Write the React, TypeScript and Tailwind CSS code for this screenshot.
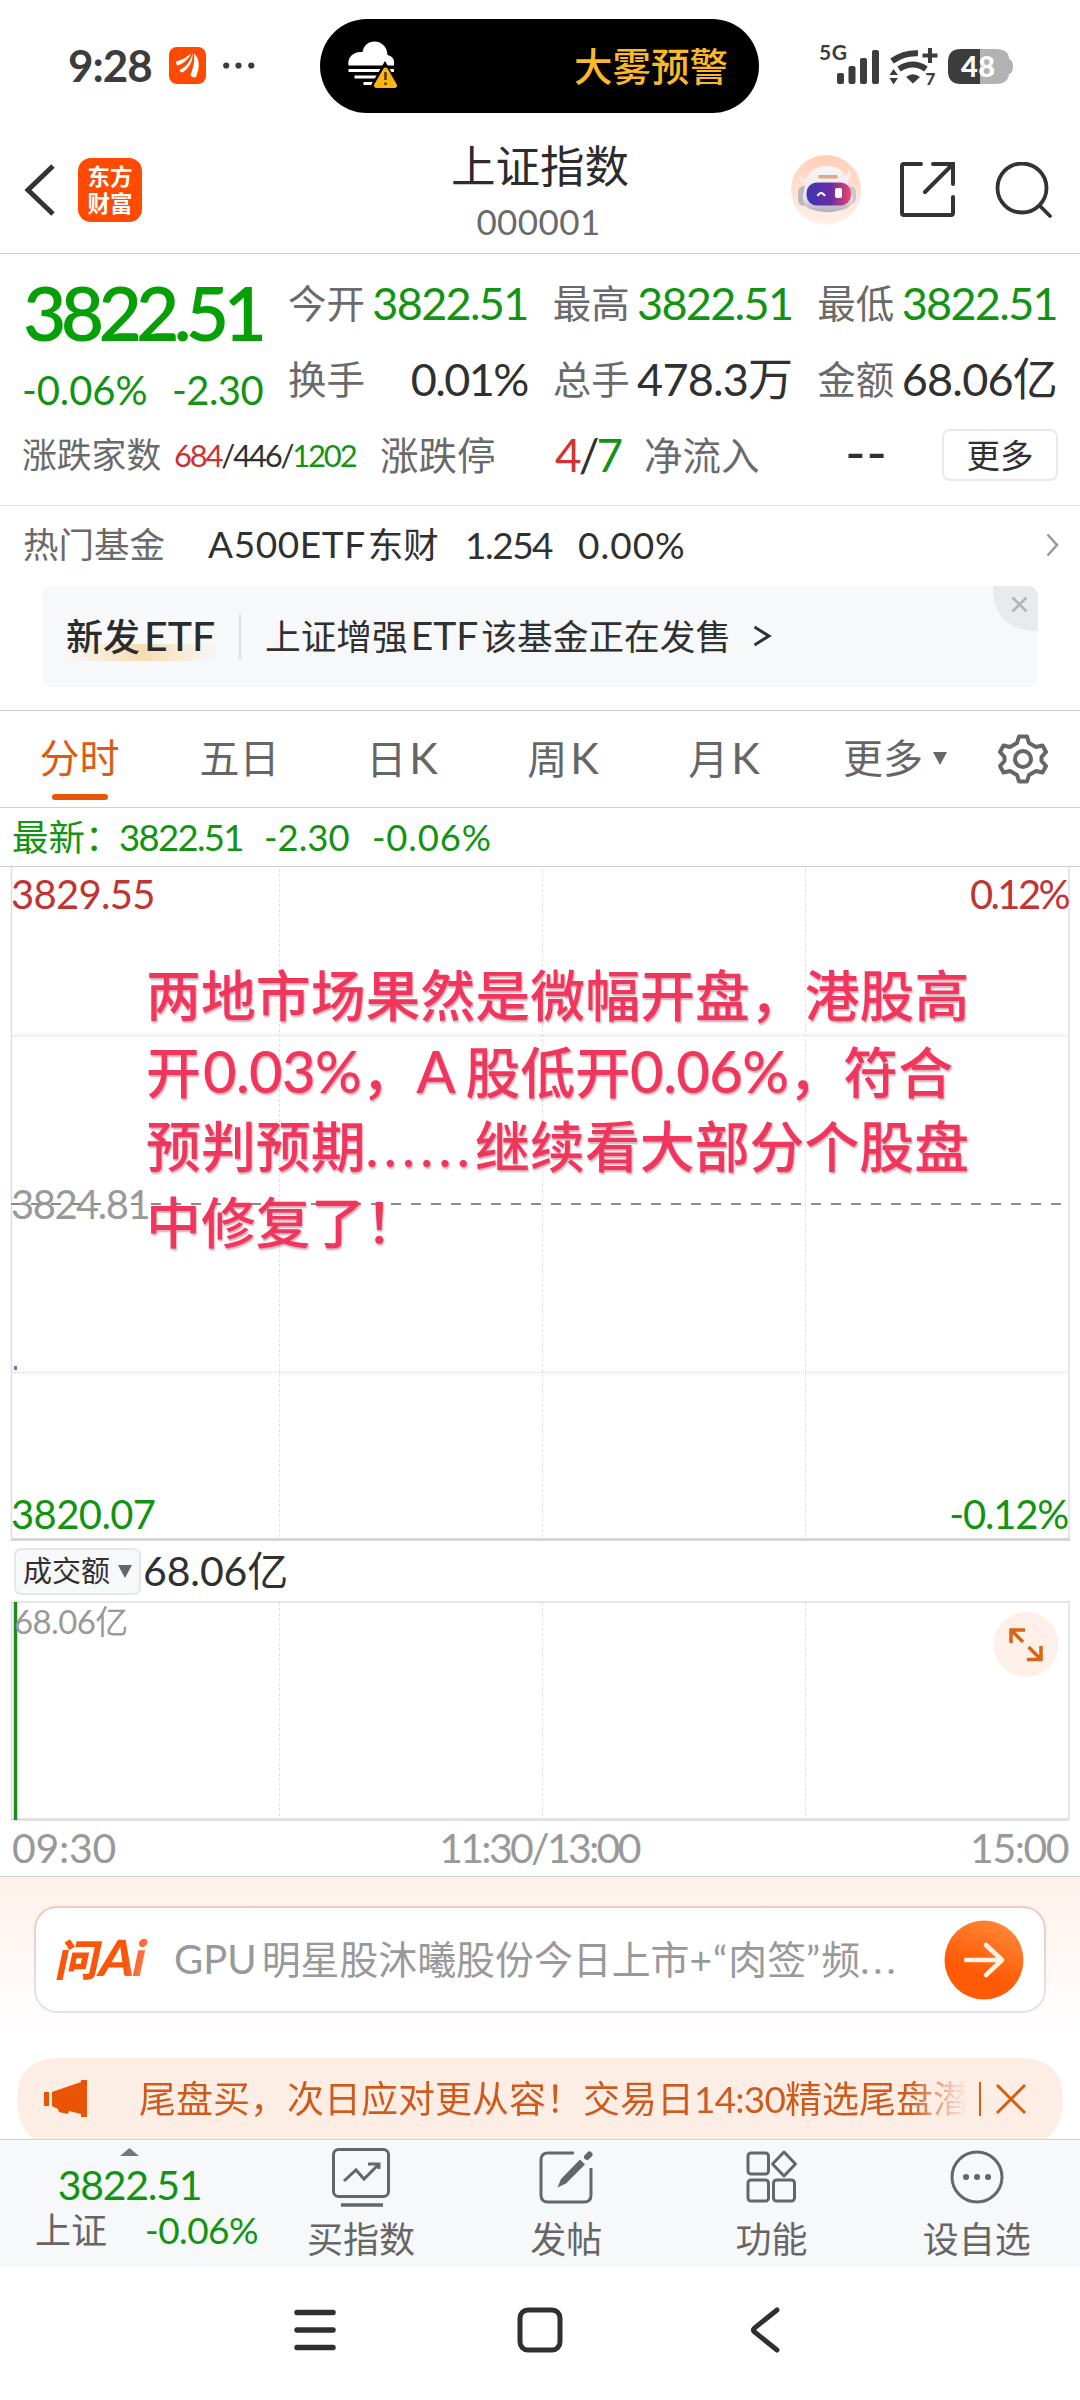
import React from "react";

const GREEN = "text-[#129412]";

function StatusBar() {
  return (
    <header className="flex h-[132px] items-center">
      <div className="mb-[2px] ml-[68px] w-[84px] whitespace-nowrap font-[Lato] text-[44px] font-bold leading-[44px] tracking-[-1px] text-[#3c3c3c]">9:28</div>
      <svg className="mb-px ml-[17px] h-[37px] w-[37px]" viewBox="0 0 37 37">
        <rect width="37" height="37" rx="8" fill="#ff4a00" />
        <path d="M7 14.500C14 13 17 10 22 6.500C20 12 14 17 8.500 18.500C7.500 18 7 16 7 14.500Z" fill="#fff" />
        <path d="M10.500 23C17 20 22 14 23.500 6C24.500 14 20 21 13.500 25.500C12 25.500 11 24.500 10.500 23Z" fill="#fff" />
        <path d="M21.500 28C24 21 26 15 25 6.500C31 12 31 20 27 30C25 31 22.500 30 21.500 28Z" fill="#fff" />
      </svg>
      <svg className="mb-px ml-[17px] h-[7px] w-[32px]" viewBox="0 0 32 7" fill="#3c3c3c">
        <circle cx="3.200" cy="3.500" r="3.100" />
        <circle cx="15.500" cy="3.500" r="3.100" />
        <circle cx="28.300" cy="3.500" r="3.100" />
      </svg>
      <div className="ml-[65px] flex h-[94px] w-[439px] items-center justify-between rounded-full bg-black pl-[27px] pr-[31px]">
        <svg className="h-[50px] w-[50px]" viewBox="0 0 50 50">
          <path d="M1.500 24.500H47C48 18 45 15 40.500 14C40 5 34 .5 27.500 .5C21 .5 16.500 5 15.500 11C7 10 0 16 1.500 24.500Z" fill="#fff" />
          <path d="M1.500 29.500H47M7.500 36H40M16.500 42.500H27" stroke="#fff" strokeWidth="3.200" />
          <path d="M38 25L52 49H24Z" fill="#000" stroke="#000" strokeWidth="5" />
          <path d="M38.500 29L47.500 44.500H29.500Z" fill="#fcb416" stroke="#fcb416" strokeWidth="5" strokeLinejoin="round" />
          <path d="M38.500 31V39M38.500 41.500V44" stroke="#5a3c00" strokeWidth="2.600" />
        </svg>
        <span className="text-[38.500px] font-medium leading-[46px] text-[#fbb829]">大雾预警</span>
      </div>
      <svg className="mb-[3px] ml-[61px] h-[42px] w-[196px] overflow-visible" viewBox="0 0 196 42" fill="#3c3c3c">
        <text x="-1" y="16" fontFamily="Lato" fontWeight="700" fontSize="21" textLength="28">5G</text>
        <rect x="17" y="29" width="7" height="11" rx="2" />
        <rect x="28.500" y="22" width="7" height="18" rx="2" />
        <rect x="40" y="14" width="7" height="26" rx="2" />
        <rect x="52" y="6" width="7" height="34" rx="2" />
        <path d="M72 17Q84 8.500 98 9.200M79 25Q93 16 106 25" fill="none" stroke="#3c3c3c" strokeWidth="6" />
        <path d="M86 33Q93 27.500 100 33L93 39.500Z" />
        <path d="M69.500 31L73.500 25L78 31ZM69.500 34L73.500 40.500L78 34Z" />
        <path d="M110 4V19M102.500 11.500H117.500" stroke="#3c3c3c" strokeWidth="4" />
        <text x="105.500" y="41" fontFamily="Lato" fontWeight="900" fontSize="17">7</text>
        <path d="M144 5H176Q189 5 189 15Q193 16 193 22.500Q193 29 189 30Q188 40 176 40H144Z" fill="#b2b2b2" />
        <path d="M160 5H141Q128 5 128 18V27Q128 40 141 40H160Z" />
        <text x="141" y="32.500" fontFamily="Lato" fontWeight="900" fontSize="29" fill="#fff" textLength="34">48</text>
      </svg>
    </header>
  );
}

function Robot() {
  return (
    <svg className="h-[70px] w-[70px]" viewBox="0 0 70 70">
      <defs>
        <linearGradient id="halo" x1="0" y1="0" x2="0" y2="1">
          <stop stopColor="#ffcfb6" />
          <stop offset="1" stopColor="#fff1ea" />
        </linearGradient>
        <linearGradient id="visor">
          <stop stopColor="#3b37b3" />
          <stop offset=".55" stopColor="#6a2ca5" />
          <stop offset="1" stopColor="#e8496a" />
        </linearGradient>
        <linearGradient id="shell" x1="0" y1="0" x2="0" y2="1">
          <stop stopColor="#fbf7f7" />
          <stop offset=".7" stopColor="#e6e2e9" />
          <stop offset="1" stopColor="#b0abb6" />
        </linearGradient>
      </defs>
      <circle cx="35" cy="35" r="35" fill="url(#halo)" />
      <path d="M9 16Q8 24 17 25L14 29Q6 25 9 16ZM58 14Q63 22 55 27L52 22Q58 20 58 14Z" fill="#f5eeee" />
      <rect x="7" y="31" width="12" height="20" rx="6" fill="#bcb8c0" />
      <rect x="53" y="31" width="12" height="18" rx="6" fill="#cbc7ce" />
      <path d="M14 31Q16 12 35 11Q54 11 58 31L62 44Q60 54 50 55Q34 60 19 54Q11 51 12 40Z" fill="url(#shell)" />
      <rect x="15.500" y="27.500" width="44.500" height="23" rx="10.500" fill="url(#visor)" />
      <rect x="27" y="20" width="20" height="3.500" rx="1.700" fill="#e0a887" />
      <path d="M26.500 41Q30 35 34 41" fill="none" stroke="#fff" strokeWidth="2.200" />
      <rect x="44" y="33" width="7" height="10" rx="2" fill="#fff" />
    </svg>
  );
}

function TitleBar() {
  return (
    <div className="flex h-[122px] border-b border-[#d0d0d0]">
      <div className="flex w-[320px] items-start pt-[26px]">
        <svg className="ml-[24px] mt-[5px] h-[54px] w-[32px]" viewBox="0 0 32 54">
          <path d="M29 3L4 27L29 51" fill="none" stroke="#333" strokeWidth="5" />
        </svg>
        <div className="ml-[22px] flex h-[64px] w-[64px] flex-col items-center justify-center rounded-[13px] bg-[#ff4a00] text-[22.500px] font-bold leading-[27px] text-white">
          <span>东方</span>
          <span>财富</span>
        </div>
      </div>
      <div className="flex w-[440px] flex-col items-center pt-[6px]">
        <h1 className="text-[44.500px] leading-[56px] text-[#2c2c2c]">上证指数</h1>
        <div className="mt-[14px] whitespace-nowrap pr-[3px] text-[35px] leading-[26px] tracking-[.4px] text-[#6a6a6a]">000001</div>
      </div>
      <div className="flex pl-[31px] pt-[23px]">
        <Robot />
        <svg className="ml-[38px] mt-[6px] h-[56px] w-[56px]" viewBox="0 0 56 56" fill="none" stroke="#333" strokeWidth="4">
          <path d="M22 3H5Q3 3 3 5V52Q3 54 5 54H52Q54 54 54 52V36M34 3H54V23M53 4L26 31" strokeLinecap="round" />
        </svg>
        <svg className="ml-[40px] mt-[7px] h-[58px] w-[58px]" viewBox="0 0 58 58" fill="none" stroke="#333" strokeWidth="3.800">
          <circle cx="27" cy="26" r="24.500" />
          <path d="M45 44L55 54" strokeLinecap="round" />
        </svg>
      </div>
    </div>
  );
}

const stats = [
  { label: "今开", value: "3822.51", cls: "text-[#129412] tracking-[-1.700px]" },
  { label: "最高", value: "3822.51", cls: "text-[#129412] tracking-[-1.700px]" },
  { label: "最低", value: "3822.51", cls: "text-[#129412] tracking-[-1.700px]" },
  { label: "换手", value: "0.01%", cls: "text-[#303030] tracking-[-1.600px]" },
  { label: "总手", value: "478.3万", cls: "text-[#303030] tracking-[-.800px]" },
  { label: "金额", value: "68.06亿", cls: "text-[#303030] tracking-[-.800px]" },
];

function Quote() {
  return (
    <section className="h-[252px] border-b border-[#e6e6e6] pt-[21px]">
      <div className="flex">
        <div className="ml-[22px] w-[241px] shrink-0">
          <div className="whitespace-nowrap pl-px pt-[4px] text-[75px] font-semibold leading-[66px] tracking-[-5.800px] text-[#06a006]">3822.51</div>
          <div className={`mt-[27px] flex justify-between whitespace-nowrap text-[40px] leading-[36px] ${GREEN}`}>
            <span className="tracking-[-.1px]">-0.06%</span>
            <span className="tracking-[-.6px]">-2.30</span>
          </div>
        </div>
        <div className="ml-[25px] grid w-[769px] grid-cols-3 gap-x-[25px] text-[38.500px]">
          {stats.map((s) => (
            <div key={s.label} className="flex h-[76px] justify-between whitespace-nowrap leading-[56px]">
              <span className="text-[#6a6a6a]">{s.label}</span>
              <span className={`text-[45px] ${s.cls}`}>{s.value}</span>
            </div>
          ))}
        </div>
      </div>
      <div className="flex h-[56px] items-center whitespace-nowrap leading-[50px]">
        <span className="ml-[22px] w-[152px] text-[34.800px] text-[#6a6a6a]">涨跌家数</span>
        <span className="w-[206px] text-[31px] tracking-[-2.200px] text-[#303030]">
          <span className="text-[#cb3434]">684</span>/446/<span className={GREEN}>1202</span>
        </span>
        <span className="w-[175px] text-[38.500px] text-[#6a6a6a]">涨跌停</span>
        <span className="w-[89px] text-[46px] tracking-[-3px] text-[#303030]">
          <span className="text-[#d23434]">4</span>/<span className={GREEN}>7</span>
        </span>
        <span className="w-[201px] text-[38.500px] text-[#6a6a6a]">净流入</span>
        <span className="w-[97px] pb-[6px] text-[56px] leading-[50px] tracking-[.5px] text-[#303030]">--</span>
        <button className="h-[52px] w-[116px] rounded-[8px] border-2 border-[#e9e9ec] pb-px text-[33.500px] leading-[46px] text-[#303030]">更多</button>
      </div>
    </section>
  );
}

function Funds() {
  return (
    <section className="h-[205px] border-b border-[#cfcfcf]">
      <div className="flex h-[77px] items-center whitespace-nowrap text-[35.500px] leading-[50px] text-[#303030]">
        <span className="ml-[23px] w-[185px] text-[#6a6a6a]">热门基金</span>
        <span className="w-[257px]"><span className="mr-[2px] text-[37px] tracking-[.6px]">A500ETF</span>东财</span>
        <span className="w-[113px] text-[37px] tracking-[-1.500px]">1.254</span>
        <span className="text-[37px] tracking-[1px]">0.00%</span>
        <svg className="ml-auto mr-[21px] h-[24px] w-[13px]" viewBox="0 0 13 24" fill="none" stroke="#999" strokeWidth="2.500">
          <path d="M1.500 1.500L11 12L1.500 22.500" />
        </svg>
      </div>
      <div className="relative ml-[42px] mt-[3px] flex h-[101px] w-[996px] items-center overflow-hidden rounded-[10px] bg-[#f7f8fa] pb-px pl-[24px]">
        <div className="relative w-[175px] border-r-2 border-[#dcdde0] text-[#2b2b2b]">
          <div className="absolute left-0 top-[30px] h-[17px] w-[152px] bg-linear-to-r from-transparent via-[#f8dcb2] to-transparent" />
          <span className="relative block whitespace-nowrap text-[37px] font-medium leading-[45px]">新发<span className="ml-[4px] text-[41px] leading-[40px]">ETF</span></span>
        </div>
        <span className="ml-[24px] whitespace-nowrap text-[35.700px] leading-[50px] text-[#303030]">上证增强<span className="mx-[3px] text-[39px]">ETF</span>该基金正在发售</span>
        <svg className="ml-[22px] h-[22px] w-[19px]" viewBox="0 0 19 22" fill="none" stroke="#303030" strokeWidth="3">
          <path d="M1.500 2L16 11L1.500 20" />
        </svg>
        <svg className="absolute right-0 top-0 h-[45px] w-[45px]" viewBox="0 0 45 45">
          <path d="M0 0H45V45Q0 45 0 0Z" fill="#e9eaec" />
          <path d="M19.500 11.500L33.500 25.500M33.500 11.500L19.500 25.500" stroke="#b3b3b3" strokeWidth="2.500" />
        </svg>
      </div>
    </section>
  );
}

function Tabs() {
  return (
    <nav className="flex h-[97px] whitespace-nowrap border-b border-[#cfcfcf] pt-[19px] text-[40px] leading-[56px] text-[#666]">
      <div className="flex w-[159px] flex-col items-center text-[#db5b12]">
        分时
        <span className="mt-[8px] h-[6px] w-[56px] rounded-full bg-[#e75506]" />
      </div>
      <span className="w-[161px] text-center">五日</span>
      <span className="w-[164px] text-center">日<span className="ml-[3px] text-[43px]">K</span></span>
      <span className="w-[158px] text-center">周<span className="ml-[3px] text-[43px]">K</span></span>
      <span className="w-[164px] text-center">月<span className="ml-[3px] text-[43px]">K</span></span>
      <span className="pl-[37px]">更多</span>
      <svg className="ml-[10px] mt-[22px] h-[13px] w-[14px]" viewBox="0 0 14 13"><path d="M0 0H14L7 13Z" fill="#666" /></svg>
      <svg className="ml-[51px] mt-[4px] h-[50px] w-[50px]" viewBox="0 0 50 50" fill="none" stroke="#666" strokeWidth="4">
        <path d="M21 2.500H29L31 9L38 13L44.500 11.500L48 18L43.500 23V27L48 32L44.500 38.500L38 37L31 41L29 47.500H21L19 41L12 37L5.500 38.500L2 32L6.500 27V23L2 18L5.500 11.500L12 13L19 9Z" strokeLinejoin="round" />
        <circle cx="25" cy="25" r="8" />
      </svg>
    </nav>
  );
}

function PriceChart() {
  return (
    <section className="relative h-[675px]">
      <svg className="absolute inset-0 h-[675px] w-[1080px]" viewBox="0 0 1080 675" fill="none">
        <path d="M11.500 0V674M1069 0V674" stroke="#dedede" strokeWidth="1.500" />
        <path d="M279.500 2V672M542.500 2V672M805.500 2V672" stroke="#e2e2e2" strokeDasharray="3 2" />
        <path d="M13 168.500H1069M13 505.500H1069" stroke="#e0e0e0" strokeDasharray="1 1" strokeWidth="2" />
        <path d="M11 337H1069" stroke="#8a8a8a" strokeWidth="2" strokeDasharray="10 10" />
        <path d="M11 672.500H1070" stroke="#d6d6d6" strokeWidth="3" />
        <rect x="14" y="499" width="3" height="4" fill="#5a7fa5" />
      </svg>
      <div className="relative flex h-[675px] flex-col justify-between pb-[6px] pl-[11px] pr-[12px] pt-[5px] text-[40px] leading-[44px] tracking-[-.9px]">
        <div className="flex justify-between text-[#c03434]"><span className="tracking-[-.7px]">3829.55</span><span className="tracking-[-2.600px]">0.12%</span></div>
        <div className="tracking-[-1.500px] text-[#999]">3824.81</div>
        <div className={`flex justify-between ${GREEN}`}><span className="tracking-[-.6px]">3820.07</span><span className="tracking-[-1.200px]">-0.12%</span></div>
      </div>
      <div className="absolute left-[146px] top-[91px] whitespace-nowrap text-[54.900px] font-medium leading-[75.700px] text-[#f0365c] [text-shadow:1px_2px_2px_rgba(140,40,70,.4)]">
        <div className="h-[75.700px]">两地市场果然是微幅开盘，港股高</div>
        <div className="relative -top-px h-[75.700px]">开<span className="ml-[2px] text-[58px] tracking-[-.6px]">0.03%</span>，<span className="text-[58px] tracking-[-1.500px]">A </span>股低开<span className="text-[58px] tracking-[-.6px]">0.06%</span>，符合</div>
        <div className="h-[75.700px]">预判预期<span className="tracking-[5.300px]">......</span>继续看大部分个股盘</div>
        <div className="h-[75.700px]">中修复了！</div>
      </div>
    </section>
  );
}

function Volume() {
  return (
    <section className="h-[335px] border-b border-[#cfcfcf]">
      <div className="flex h-[59px] items-center whitespace-nowrap">
        <div className="mb-px ml-[14px] flex h-[47px] w-[127px] items-center rounded-[7px] border-2 border-[#e6e7ea] bg-[#f7f8fa] pl-[7px] text-[29px] leading-[40px] text-[#303030]">
          成交额
          <svg className="ml-[8px] h-[13px] w-[14px]" viewBox="0 0 14 13"><path d="M0 0H14L7 13Z" fill="#666" /></svg>
        </div>
        <span className="mb-[2px] ml-[2px] text-[41px] leading-[50px] tracking-[-.1px] text-[#303030]">68.06亿</span>
      </div>
      <div className="relative h-[221px]">
        <svg className="absolute inset-0 h-[221px] w-[1080px]" viewBox="0 0 1080 221" fill="none">
          <path d="M11.500 1H1069V219" stroke="#dedede" strokeWidth="1.500" />
          <path d="M11.500 1V219" stroke="#dedede" strokeWidth="1.500" />
          <path d="M11 218.500H1069" stroke="#dcdcdc" strokeWidth="2.500" />
          <path d="M279.500 2V217M542.500 2V217M805.500 2V217" stroke="#e2e2e2" strokeDasharray="3 2" />
          <path d="M15.500 1V219" stroke="#1c8c1c" strokeWidth="3.500" />
          <circle cx="1026" cy="43.500" r="32.500" fill="#fdf0e9" />
          <path d="M1011 42V29H1025M1011.500 29.500L1023 41M1041 45V58.500H1027M1040.500 58L1028.500 46" stroke="#dc6214" strokeWidth="3.500" />
        </svg>
        <span className="relative ml-[14px] block whitespace-nowrap text-[33px] leading-[40px] tracking-[-.6px] text-[#999]">68.06亿</span>
      </div>
      <div className="flex h-[52px] items-center justify-between whitespace-nowrap px-[12px] text-[41px] leading-[50px] text-[#999]">
        <span className="tracking-[-.3px]">09:30</span>
        <span className="relative -left-[4px] tracking-[-2.700px]">11:30/13:00</span>
        <span className="tracking-[-1.500px]">15:00</span>
      </div>
    </section>
  );
}

function Ask() {
  return (
    <section className="h-[262px] bg-linear-to-b from-[#fff1ec] to-white to-60% pt-[29px]">
      <div className="mx-[34px] rounded-[23px] bg-linear-to-b from-[#f0c8c0] to-[#dde6ee] p-[2px]">
        <div className="flex h-[103px] items-center rounded-[21px] bg-white pl-[19px]">
          <div className="w-[119px] shrink-0 -skew-x-[12deg] whitespace-nowrap bg-linear-to-r from-[#f9560a] via-[#f9560a] via-60% to-[#ffa27c] bg-clip-text pb-[3px] pl-[3px] text-[43px] font-black leading-[52px] tracking-[-1px] text-transparent">问<span className="text-[50px] tracking-[-2px]">Ai</span></div>
          <span className="w-[770px] shrink-0 whitespace-nowrap pb-[2px] text-[38.900px] leading-[50px] text-[#999]"><span className="mr-[5px] text-[40px]">GPU</span>明星股沐曦股份今日上市<span className="tracking-[1px]">+“</span>肉签<span className="tracking-[1px]">”</span>频<span className="tracking-[4px]">...</span></span>
          <svg className="h-[80px] w-[80px] shrink-0" viewBox="0 0 80 80" fill="none">
            <defs>
              <linearGradient id="send" x1=".8" y1="0" x2=".35" y2="1">
                <stop stopColor="#ff8a38" />
                <stop offset=".7" stopColor="#ff5a06" />
              </linearGradient>
            </defs>
            <circle cx="40" cy="40" r="39.500" fill="url(#send)" />
            <path d="M22 40H58M42 25L58 40L42 55" stroke="#fff4e4" strokeWidth="4.500" strokeLinecap="round" strokeLinejoin="round" />
          </svg>
        </div>
      </div>
      <div className="ml-[17px] mt-[45px] flex h-[81px] w-[1046px] items-center bg-[#fceee5] pl-[27px] pt-px [clip-path:path('M0_42Q0_0_42_0H1004Q1046_0_1046_42Q1046_66_1030_81H16Q0_66_0_42Z')]">
        <svg className="h-[38px] w-[44px]" viewBox="0 0 44 38" fill="#e95504">
          <path d="M0 12H5V26H0ZM8 12L37 2V0H43V37H37V34L25 31L24 34L15 32L14 29L8 26Z" />
        </svg>
        <span className="relative ml-[51px] w-[828px] whitespace-nowrap bg-linear-to-r from-[#cf5a1c] from-93% to-transparent bg-clip-text text-[37px] leading-[50px] text-transparent">
          尾盘买，次日应对更从容！交易日<span className="tracking-[-.8px]">14:30</span>精选尾盘潜
        </span>
        <svg className="ml-[11px] h-[34px] w-[50px]" viewBox="0 0 50 34" fill="none" stroke="#dc5a10">
          <path d="M2 0V34" strokeWidth="2" />
          <path d="M19 3L47 31M47 3L19 31" strokeWidth="3" />
        </svg>
      </div>
    </section>
  );
}

const actions = [
  {
    label: "买指数",
    icon: (
      <>
        <rect x="1.500" y="1.500" width="55" height="47" rx="5" />
        <path d="M9 57H51" strokeWidth="3.500" />
        <path d="M12 33L24 22L32 31L47 16M36 16H47V21" />
      </>
    ),
  },
  {
    label: "发帖",
    icon: (
      <>
        <path d="M37 5H11Q4 5 4 12V47Q4 54 11 54H47Q54 54 54 47V20" />
        <path d="M20.500 39.500L24 31L43 11.500L48 16.500L29 35.500Z" fill="#666" stroke="none" />
        <path d="M50 9L52.500 6.500" strokeWidth="6" strokeLinecap="round" />
      </>
    ),
  },
  {
    label: "功能",
    icon: (
      <>
        <rect x="5" y="5" width="20.500" height="21" rx="3" />
        <path d="M41 4L52.500 16L41 28L29.500 16Z" strokeLinejoin="round" />
        <rect x="5" y="32" width="20.500" height="21" rx="3" />
        <rect x="30.500" y="32" width="21" height="21" rx="3" />
      </>
    ),
  },
  {
    label: "设自选",
    icon: (
      <>
        <circle cx="29" cy="29" r="25" />
        <path d="M18 29H18.100M29 29H29.100M40 29H40.100" strokeWidth="6" strokeLinecap="round" />
      </>
    ),
  },
];

function BottomBar() {
  return (
    <footer className="flex h-[128px] border-t border-[#cfd1d3] bg-[#f7f8fa]">
      <div className="flex w-[259px] flex-col items-center whitespace-nowrap">
        <svg className="mt-[8px] h-[8px] w-[19px]" viewBox="0 0 19 8"><path d="M0 8L9.500 0L19 8Z" fill="#777" /></svg>
        <span className={`mt-[8px] text-[41px] leading-[42px] tracking-[-1.300px] ${GREEN}`}>3822.51</span>
        <div className="mt-[2px] flex w-full items-center justify-between pl-[35px] pr-px leading-[44px]">
          <span className="text-[36px] text-[#666]">上证</span>
          <span className={`text-[37px] tracking-[-.6px] ${GREEN}`}>-0.06%</span>
        </div>
      </div>
      <div className="grid w-[821px] grid-cols-4">
        {actions.map((a) => (
          <div key={a.label} className="flex flex-col items-center whitespace-nowrap pr-px pt-[8px]">
            <svg className="h-[60px] w-[58px]" viewBox="0 0 58 60" fill="none" stroke="#666" strokeWidth="3">{a.icon}</svg>
            <span className="mt-[6px] text-[36px] leading-[50px] text-[#666]">{a.label}</span>
          </div>
        ))}
      </div>
    </footer>
  );
}

function SystemNav() {
  return (
    <div className="flex h-[133px] items-start pt-[39px]">
      <svg className="ml-[293px] h-[48px] w-[44px]" viewBox="0 0 44 48" stroke="#303030" strokeWidth="5.500" strokeLinecap="round">
        <path d="M4 6.500H40M4 24H40M4 41.500H40" />
      </svg>
      <svg className="ml-[180px] h-[48px] w-[46px]" viewBox="0 0 46 48" fill="none" stroke="#303030" strokeWidth="5">
        <rect x="3" y="4" width="40" height="40" rx="8" />
      </svg>
      <svg className="ml-[186px] h-[48px] w-[32px]" viewBox="0 0 32 48" fill="none" stroke="#303030" strokeWidth="5" strokeLinecap="round">
        <path d="M28 4L5.500 22Q3.500 24 5.500 26L28 44" />
      </svg>
    </div>
  );
}

export default function App() {
  return (
    <main className="h-[2400px] w-[1080px] overflow-hidden bg-white font-['Lato','Noto_Sans_CJK_SC',sans-serif]">
      <StatusBar />
      <TitleBar />
      <Quote />
      <Funds />
      <Tabs />
      <div className={`flex h-[58px] items-center whitespace-nowrap pl-[12px] text-[36.500px] leading-[50px] ${GREEN}`}>
        <span className="w-[107px]">最新：</span>
        <span className="w-[145px] tracking-[-1.700px]">3822.51</span>
        <span className="w-[108px]">-2.30</span>
        <span className="tracking-[.8px]">-0.06%</span>
      </div>
      <div className="h-px bg-[#d0d0d0]" />
      <PriceChart />
      <Volume />
      <Ask />
      <BottomBar />
      <SystemNav />
    </main>
  );
}
